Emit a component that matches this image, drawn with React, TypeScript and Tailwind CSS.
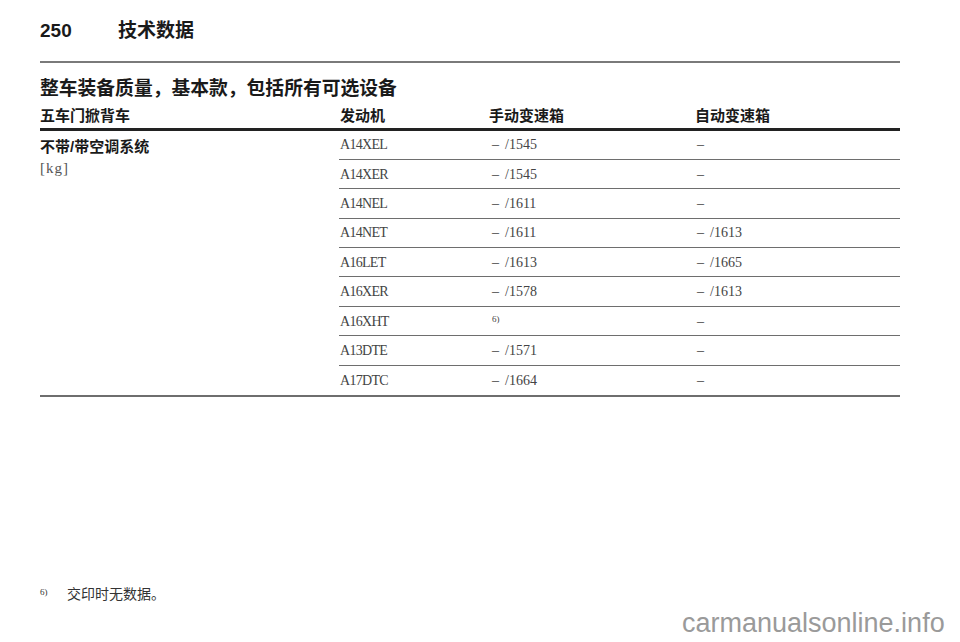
const rows: { engine: string; manual: string; auto: string; note?: boolean }[] = [
  { engine: "A14XEL", manual: "1545", auto: "" },
  { engine: "A14XER", manual: "1545", auto: "" },
  { engine: "A14NEL", manual: "1611", auto: "" },
  { engine: "A14NET", manual: "1611", auto: "1613" },
  { engine: "A16LET", manual: "1613", auto: "1665" },
  { engine: "A16XER", manual: "1578", auto: "1613" },
  { engine: "A16XHT", manual: "", auto: "", note: true },
  { engine: "A13DTE", manual: "1571", auto: "" },
  { engine: "A17DTC", manual: "1664", auto: "" },
];

const sans = "font-['Liberation_Sans','Noto_Sans_CJK_SC',sans-serif]";
const serif = "font-['Liberation_Serif','Noto_Sans_CJK_SC',serif]";

function Mass({ value }: { value: string }) {
  return (
    <>
      <span>–</span>
      {value && <span className="ml-[6px]">/{value}</span>}
    </>
  );
}

export default function App() {
  return (
    <div className="relative h-[642px] w-[960px] overflow-hidden bg-white text-[#1a1a1a]">
      <div className="w-[900px] pl-[40px]">
        {/* page header */}
        <div className={`flex h-[61px] items-start pt-[19px] ${sans}`}>
          <span className="w-[78px] text-[19px] font-bold leading-[24px]">250</span>
          <span className="text-[19px] font-bold leading-[24px]">技术数据</span>
        </div>
        <div className="h-[1.5px] bg-[#7a7a7a]" />

        <h2 className={`mt-[14px] text-[18.8px] font-bold leading-[24px] ${sans}`}>
          整车装备质量，基本款，包括所有可选设备
        </h2>

        {/* column headings */}
        <div className={`mt-[5px] flex h-[21px] items-center text-[15px] font-bold ${sans}`}>
          <span className="w-[300px]">五车门掀背车</span>
          <span className="w-[149px]">发动机</span>
          <span className="w-[206px]">手动变速箱</span>
          <span>自动变速箱</span>
        </div>
        <div className="mt-[1px] h-[3px] bg-[#222]" />

        {/* body */}
        <div className="flex">
          <div className="w-[299px] pt-[6px]">
            <div className={`text-[15px] font-bold leading-[19px] ${sans}`}>不带/带空调系统</div>
            <div className={`mt-[3px] text-[15px] leading-[19px] tracking-[1px] text-[#555] ${serif}`}>[kg]</div>
          </div>
          <div className="flex-1">
            {rows.map((r, i) => (
              <div
                key={r.engine}
                className={`flex h-[29.4px] items-center text-[14px] text-[#444] ${serif} ${
                  i < rows.length - 1 ? "border-b-[1.5px] border-[#6e6e6e]" : ""
                }`}
              >
                <span className="w-[151px] pl-[1px] tracking-[-0.7px]">{r.engine}</span>
                <span className="w-[206px] pl-[2px]">
                  {r.note ? (
                    <sup className="relative top-[-4px] text-[9px]">6)</sup>
                  ) : (
                    <Mass value={r.manual} />
                  )}
                </span>
                <span className="pl-[1px]">
                  <Mass value={r.auto} />
                </span>
              </div>
            ))}
          </div>
        </div>
        <div className="h-[1.5px] bg-[#6e6e6e]" />

        {/* footnote */}
        <div className={`mt-[188px] flex items-start text-[#333] ${serif}`}>
          <span className="w-[27px] pt-[1px] text-[9px]">6)</span>
          <span className="text-[14px] leading-[20px]">交印时无数据。</span>
        </div>
      </div>

      <div className="absolute left-[682px] top-[607px] font-['Liberation_Sans',Arial,sans-serif] text-[27px] leading-[32px] text-[#9a9a9a]">
        carmanualsonline.info
      </div>
    </div>
  );
}
